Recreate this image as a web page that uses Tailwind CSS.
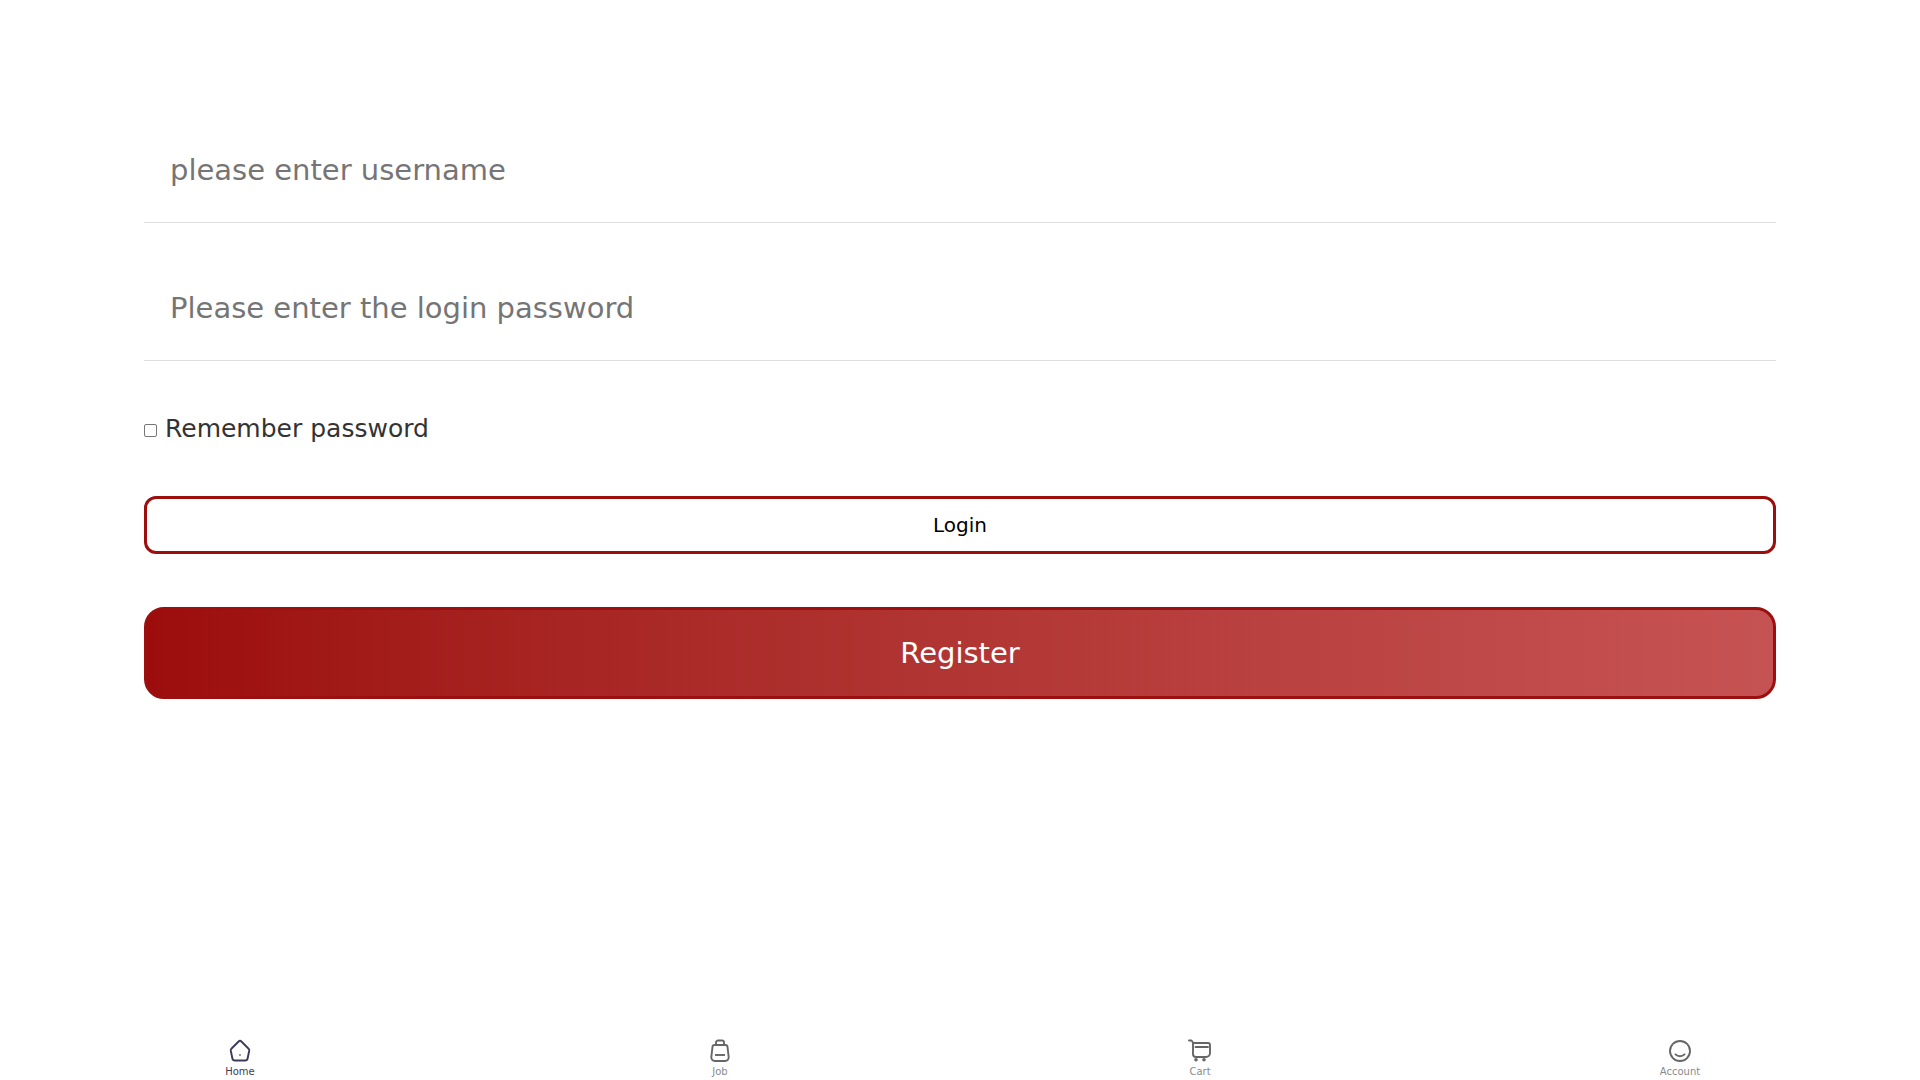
<!DOCTYPE html>
<html lang="en">

<head>
    <meta charset="UTF-8">
    <script src="https://cdn.jsdelivr.net/npm/@tailwindcss/browser@4"></script>
    <title>Login</title>
</head>

<body class="bg-white font-['DejaVu_Sans',sans-serif]">
    <div class="h-[1080px] flex flex-col justify-between">

        <!-- Login form -->
        <form class="w-[1632px] mx-auto pt-[111px]">
            <input type="text" placeholder="please enter username"
                class="block w-full h-[112px] px-[26px] pt-[6px] text-[29px] border-b border-[#dedede] outline-none placeholder:text-[#757575]">
            <input type="password" placeholder="Please enter the login password"
                class="block w-full h-[112px] mt-[26px] px-[26px] pt-[6px] text-[29px] border-b border-[#dedede] outline-none placeholder:text-[#757575]">

            <label class="flex items-center mt-[50px] h-[36px] text-[25px] text-[#333333]">
                <input type="checkbox" class="appearance-none w-[13px] h-[13px] mt-[3px] mr-[8px] border border-[#767676] rounded-[2px]">
                Remember password
            </label>

            <button type="button"
                class="block w-full h-[58px] mt-[49px] border-[3px] border-[#9c0f0f] rounded-[12px] bg-white text-[20px] text-black">Login</button>
            <button type="button"
                class="block w-full h-[92px] mt-[53px] pt-[2px] border-[3px] border-[#9c0f0f] rounded-[20px] bg-linear-to-r from-[#9c0c0c] to-[#c65353] text-[29px] text-white">Register</button>
        </form>

        <!-- Bottom tabs -->
        <nav class="grid grid-cols-4 h-[60px] pt-[19px]">
            <a class="flex flex-col items-center text-[10px] text-[#3c3c5a]">
                <svg class="w-[24px] h-[24px]" viewBox="0 0 24 24" fill="none" stroke="currentColor" stroke-width="1.9" stroke-linejoin="round">
                    <path d="M10.600 2.500a2 2 0 0 1 2.800 0l7 7a2.500 2.500 0 0 1 .8 2.200l-1.600 7.800a2.500 2.500 0 0 1-2.500 2H6.900a2.500 2.500 0 0 1-2.500-2L2.800 11.700a2.500 2.500 0 0 1 .8-2.200Z" />
                    <path d="M12 15.300v1.500" stroke="#777777" />
                </svg>
                <span class="mt-[1px]">Home</span>
            </a>
            <a class="flex flex-col items-center text-[10px] text-[#8a8a8a]">
                <svg class="w-[24px] h-[24px] text-[#666666]" viewBox="0 0 24 24" fill="none" stroke="currentColor" stroke-width="1.9" stroke-linejoin="round">
                    <path d="M8 6V3.500a2 2 0 0 1 2-2h4a2 2 0 0 1 2 2V6" />
                    <path d="M6.500 6h11a2 2 0 0 1 2 1.800l1.200 10.400a3.500 3.500 0 0 1-3.500 3.800H6.800a3.500 3.500 0 0 1-3.500-3.800L4.500 7.800A2 2 0 0 1 6.500 6Z" />
                    <path d="M7 16h10" />
                </svg>
                <span class="mt-[1px]">Job</span>
            </a>
            <a class="flex flex-col items-center text-[10px] text-[#8a8a8a]">
                <svg class="w-[24px] h-[24px] text-[#666666]" viewBox="0 0 24 24" fill="none" stroke="currentColor" stroke-width="1.9" stroke-linejoin="round" stroke-linecap="round">
                    <path d="M1 1.500h2.500L5 3.500V15a3 3 0 0 0 3 3h10a4 4 0 0 0 4-4V6a2 2 0 0 0-2-2H5" />
                    <path d="M7.500 8H20" />
                    <circle cx="8" cy="20.800" r="1.800" fill="currentColor" stroke="none" />
                    <circle cx="16" cy="20.800" r="1.800" fill="currentColor" stroke="none" />
                </svg>
                <span class="mt-[1px]">Cart</span>
            </a>
            <a class="flex flex-col items-center text-[10px] text-[#8a8a8a]">
                <svg class="w-[24px] h-[24px] text-[#666666]" viewBox="0 0 24 24" fill="none" stroke="currentColor" stroke-width="1.9" stroke-linecap="round">
                    <circle cx="12" cy="12" r="10" />
                    <path d="M7.500 15.300c2.500 2.500 6.500 2.500 9 0" />
                </svg>
                <span class="mt-[1px]">Account</span>
            </a>
        </nav>
    </div>
</body>

</html>
